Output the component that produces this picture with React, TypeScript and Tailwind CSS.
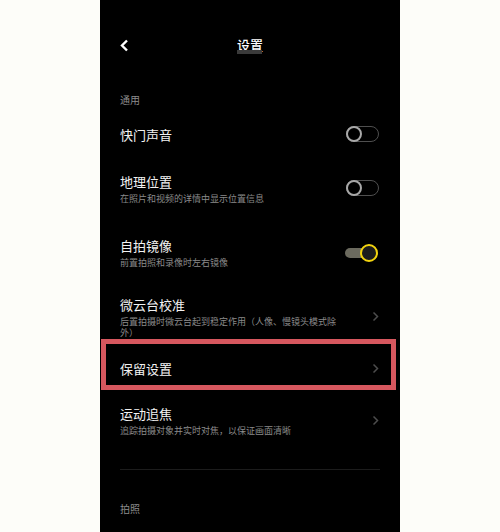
import React from "react";

const font = { fontFamily: '"Noto Sans CJK SC", "Noto Sans", sans-serif' };

function Chevron() {
  return (
    <svg width="7" height="11" viewBox="0 0 7 11" className="shrink-0">
      <polyline points="1.5,1.5 5.5,5.5 1.5,9.5" fill="none" stroke="#4d4d4d" strokeWidth="1.5" />
    </svg>
  );
}

function Toggle({ on }: { on?: boolean }) {
  if (on) {
    return (
      <div className="relative w-[33px] h-[18px] shrink-0 flex items-center">
        <div className="h-[10px] w-[26px] rounded-full bg-[#6b6a5e]" />
        <div className="absolute right-0 top-0 h-[18px] w-[18px] rounded-full border-[2.5px] border-[#f2d30f] bg-[#1c1c1c]" />
      </div>
    );
  }
  return (
    <div className="relative w-[33px] h-[16px] shrink-0 rounded-full border border-[#4f4f4f]">
      <div className="absolute -left-px -top-px h-[16px] w-[16px] rounded-full border-2 border-[#a8a8a8] bg-black" />
    </div>
  );
}

function Item({ title, sub, right }: { title: string; sub?: string; right: React.ReactNode }) {
  return (
    <div className="flex items-center justify-between w-full">
      <div className="flex flex-col max-w-[226px]">
        <div className="text-[13px] leading-[17px] text-[#f2f2f2]">{title}</div>
        {sub && <div className="mt-[3px] text-[9px] leading-[11px] text-[#8a8a8a]">{sub}</div>}
      </div>
      {right}
    </div>
  );
}

export default function App() {
  return (
    <div className="flex justify-center h-[532px] bg-[#fdfdf9]" style={font}>
      <div className="w-[300px] h-[532px] bg-black overflow-hidden flex flex-col">
        {/* Header */}
        <div className="h-[90px] grid grid-cols-[1fr_auto_1fr] items-center px-[20px]">
          <svg width="9" height="13" viewBox="0 0 9 13">
            <polyline points="7,1.5 2,6.5 7,11.5" fill="none" stroke="#ffffff" strokeWidth="2.4" />
          </svg>
          <div className="flex flex-col items-center">
            <div className="text-[13px] leading-[17px] font-medium text-white">设置</div>
            <div className="-mt-[3px] h-[4px] w-[25px] bg-[#3a3a3a]" />
          </div>
          <div />
        </div>

        {/* 通用 */}
        <div className="h-[18px] flex items-center pl-[20px] text-[10px] text-[#8c8c8c]">通用</div>

        <div className="h-[52px] flex items-center pl-[20px] pr-[21px]">
          <Item title="快门声音" right={<Toggle />} />
        </div>
        <div className="h-[56px] flex items-center pl-[20px] pr-[21px]">
          <Item title="地理位置" sub="在照片和视频的详情中显示位置信息" right={<Toggle />} />
        </div>
        <div className="h-[73px] flex items-center pl-[20px] pr-[22px]">
          <Item title="自拍镜像" sub="前置拍照和录像时左右镜像" right={<Toggle on />} />
        </div>
        <div className="h-[50px] pt-[5px] flex items-center pl-[20px] pr-[21px]">
          <Item
            title="微云台校准"
            sub="后置拍摄时微云台起到稳定作用（人像、慢镜头模式除外）"
            right={<Chevron />}
          />
        </div>

        {/* highlighted row */}
        <div className="h-[51px] ml-[1px] mr-[4px] border-[5px] border-[#d6575e] pt-[7px] flex items-center pl-[14px] pr-[12px]">
          <Item title="保留设置" right={<Chevron />} />
        </div>

        <div className="h-[60px] flex items-center pl-[20px] pr-[21px]">
          <Item title="运动追焦" sub="追踪拍摄对象并实时对焦，以保证画面清晰" right={<Chevron />} />
        </div>

        <div className="mt-[19px] mx-[20px] h-px bg-[#1c1c1c]" />

        <div className="mt-[32px] pl-[20px] text-[10px] leading-[14px] text-[#8c8c8c]">拍照</div>
      </div>
    </div>
  );
}
